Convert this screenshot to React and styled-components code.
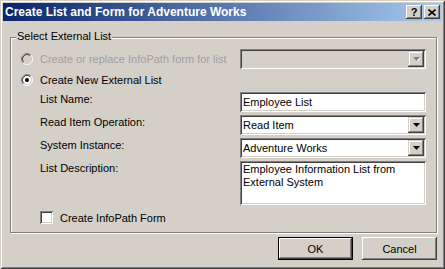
import React from 'react';
import styled, { createGlobalStyle } from 'styled-components';

const GlobalStyle = createGlobalStyle`
  html, body {
    margin: 0;
    padding: 0;
    background: #d4d0c8;
  }
  body {
    font-family: "Liberation Sans", Arial, sans-serif;
    font-size: 11px;
    color: #000;
  }
`;

const raised = `
  box-shadow: inset -1px -1px #404040, inset 1px 1px #fff, inset -2px -2px #808080, inset 2px 2px #d4d0c8;
`;

const sunken = `
  box-shadow: inset 1px 1px #808080, inset -1px -1px #fff, inset 2px 2px #404040, inset -2px -2px #d4d0c8;
`;

const Window = styled.div`
  width: 445px;
  height: 269px;
  box-sizing: border-box;
  padding: 3px;
  background: #d4d0c8;
  box-shadow: inset 1px 1px #d4d0c8, inset -1px -1px #404040, inset 2px 2px #fff, inset -2px -2px #808080;
  display: flex;
  flex-direction: column;
`;

const TitleBar = styled.div`
  height: 18px;
  display: flex;
  align-items: center;
  padding: 0 2px;
  background: linear-gradient(to right, #0a246a, #a6caf0);
  color: #fff;
  font-weight: bold;
  font-size: 12px;
`;

const TitleText = styled.div`
  flex: 1;
  white-space: nowrap;
`;

const TitleButtons = styled.div`
  display: flex;
  gap: 2px;
`;

const TitleButton = styled.div`
  width: 16px;
  height: 14px;
  box-sizing: border-box;
  background: #d4d0c8;
  ${raised}
  display: flex;
  align-items: center;
  justify-content: center;
  color: #000;
  font-weight: bold;
  font-size: 11px;
  line-height: 14px;
`;

const Body = styled.div`
  display: flex;
  flex-direction: column;
  padding: 0 5px 0 7px;
`;

const GroupBox = styled.div`
  position: relative;
  margin-top: 16px;
  border: 1px solid #808080;
  box-shadow: inset 1px 1px #fff, 1px 1px #fff;
  padding: 11px 10px 8px 10px;
  display: flex;
  flex-direction: column;
`;

const Caption = styled.span`
  position: absolute;
  top: -8px;
  left: 5px;
  padding: 0 1px;
  line-height: 13px;
  background: #d4d0c8;
`;

const RowA = styled.div`
  height: 20px;
  display: flex;
  align-items: center;
  justify-content: space-between;
`;

const OptionRow = styled.label`
  display: flex;
  align-items: center;
  gap: 7px;
  height: 16px;
  margin-top: ${p => p.$top || 0}px;
  color: ${p => (p.$disabled ? '#a19f9b' : '#000')};
  white-space: nowrap;
`;

const FormGrid = styled.div`
  display: grid;
  grid-template-columns: 1fr 186px;
  row-gap: 3px;
  margin-top: 4px;
  padding-left: 19px;
`;

const FieldLabel = styled.div`
  padding-top: 1px;
  line-height: 13px;
`;

const TextBox = styled.div`
  height: ${p => p.$h || 20}px;
  box-sizing: border-box;
  background: #fff;
  ${sunken}
  padding: 2px 3px;
  line-height: ${p => (p.$h ? '13px' : '16px')};
`;

const ComboBox = styled.div`
  width: 186px;
  height: 20px;
  box-sizing: border-box;
  padding: 2px;
  background: ${p => (p.$disabled ? '#d4d0c8' : '#fff')};
  ${sunken}
  display: flex;
  align-items: stretch;
`;

const ComboText = styled.div`
  flex: 1;
  padding-left: 1px;
  line-height: 16px;
  white-space: nowrap;
`;

const DropButton = styled.div`
  width: 16px;
  box-sizing: border-box;
  background: #d4d0c8;
  box-shadow: inset -1px -1px #404040, inset 1px 1px #d4d0c8, inset -2px -2px #808080, inset 2px 2px #fff;
  display: flex;
  align-items: center;
  justify-content: center;
`;

const CheckRow = styled.label`
  display: flex;
  align-items: center;
  gap: 7px;
  height: 13px;
  margin-top: 6px;
  padding-left: 19px;
`;

const CheckBox = styled.span`
  width: 13px;
  height: 13px;
  box-sizing: border-box;
  background: #fff;
  ${sunken}
`;

const ButtonRow = styled.div`
  display: flex;
  justify-content: flex-end;
  gap: 9px;
  margin-top: 4px;
`;

const PushButton = styled.div`
  width: 75px;
  height: 23px;
  box-sizing: border-box;
  display: flex;
  align-items: center;
  justify-content: center;
  background: #d4d0c8;
  ${raised}
  border: ${p => (p.$default ? '1px solid #000' : 'none')};
`;

const Radio = ({ checked, disabled }) => (
  <svg width="12" height="12" viewBox="0 0 12 12">
    <circle cx="6" cy="6" r="4.2" fill={disabled ? '#d4d0c8' : '#fff'} />
    <path d="M2.11 9.89 A5.5 5.5 0 0 1 9.89 2.11" fill="none" stroke="#808080" />
    <path d="M9.89 2.11 A5.5 5.5 0 0 1 2.11 9.89" fill="none" stroke="#fff" />
    <path d="M2.82 9.18 A4.5 4.5 0 0 1 9.18 2.82" fill="none" stroke="#404040" />
    <path d="M9.18 2.82 A4.5 4.5 0 0 1 2.82 9.18" fill="none" stroke="#d4d0c8" />
    {checked && <circle cx="6" cy="6" r="2" fill="#000" />}
  </svg>
);

const Arrow = ({ disabled }) => (
  <svg width="7" height="4" viewBox="0 0 7 4">
    {disabled && <path d="M1 1 H8 L4.5 4.5 Z" fill="#fff" />}
    <path d="M0 0 H7 L3.5 4 Z" fill={disabled ? '#808080' : '#000'} />
  </svg>
);

const CloseGlyph = () => (
  <svg width="8" height="7" viewBox="0 0 8 7">
    <path d="M0.5 0.5 L7.5 6.5 M7.5 0.5 L0.5 6.5" stroke="#000" strokeWidth="1.6" />
  </svg>
);

const Combo = ({ value, disabled }) => (
  <ComboBox $disabled={disabled}>
    <ComboText>{value}</ComboText>
    <DropButton>
      <Arrow disabled={disabled} />
    </DropButton>
  </ComboBox>
);

export default function App() {
  return (
    <>
      <GlobalStyle />
      <Window>
        <TitleBar>
          <TitleText>Create List and Form for Adventure Works</TitleText>
          <TitleButtons>
            <TitleButton>?</TitleButton>
            <TitleButton>
              <CloseGlyph />
            </TitleButton>
          </TitleButtons>
        </TitleBar>
        <Body>
          <GroupBox>
            <Caption>Select External List</Caption>
            <RowA>
              <OptionRow $disabled>
                <Radio disabled />
                Create or replace InfoPath form for list
              </OptionRow>
              <Combo disabled value="" />
            </RowA>
            <OptionRow $top={3}>
              <Radio checked />
              Create New External List
            </OptionRow>
            <FormGrid>
              <FieldLabel>List Name:</FieldLabel>
              <TextBox>Employee List</TextBox>
              <FieldLabel>Read Item Operation:</FieldLabel>
              <Combo value="Read Item" />
              <FieldLabel>System Instance:</FieldLabel>
              <Combo value="Adventure Works" />
              <FieldLabel>List Description:</FieldLabel>
              <TextBox $h={44}>
                Employee Information List from
                <br />
                External System
              </TextBox>
            </FormGrid>
            <CheckRow>
              <CheckBox />
              Create InfoPath Form
            </CheckRow>
          </GroupBox>
          <ButtonRow>
            <PushButton $default>OK</PushButton>
            <PushButton>Cancel</PushButton>
          </ButtonRow>
        </Body>
      </Window>
    </>
  );
}
